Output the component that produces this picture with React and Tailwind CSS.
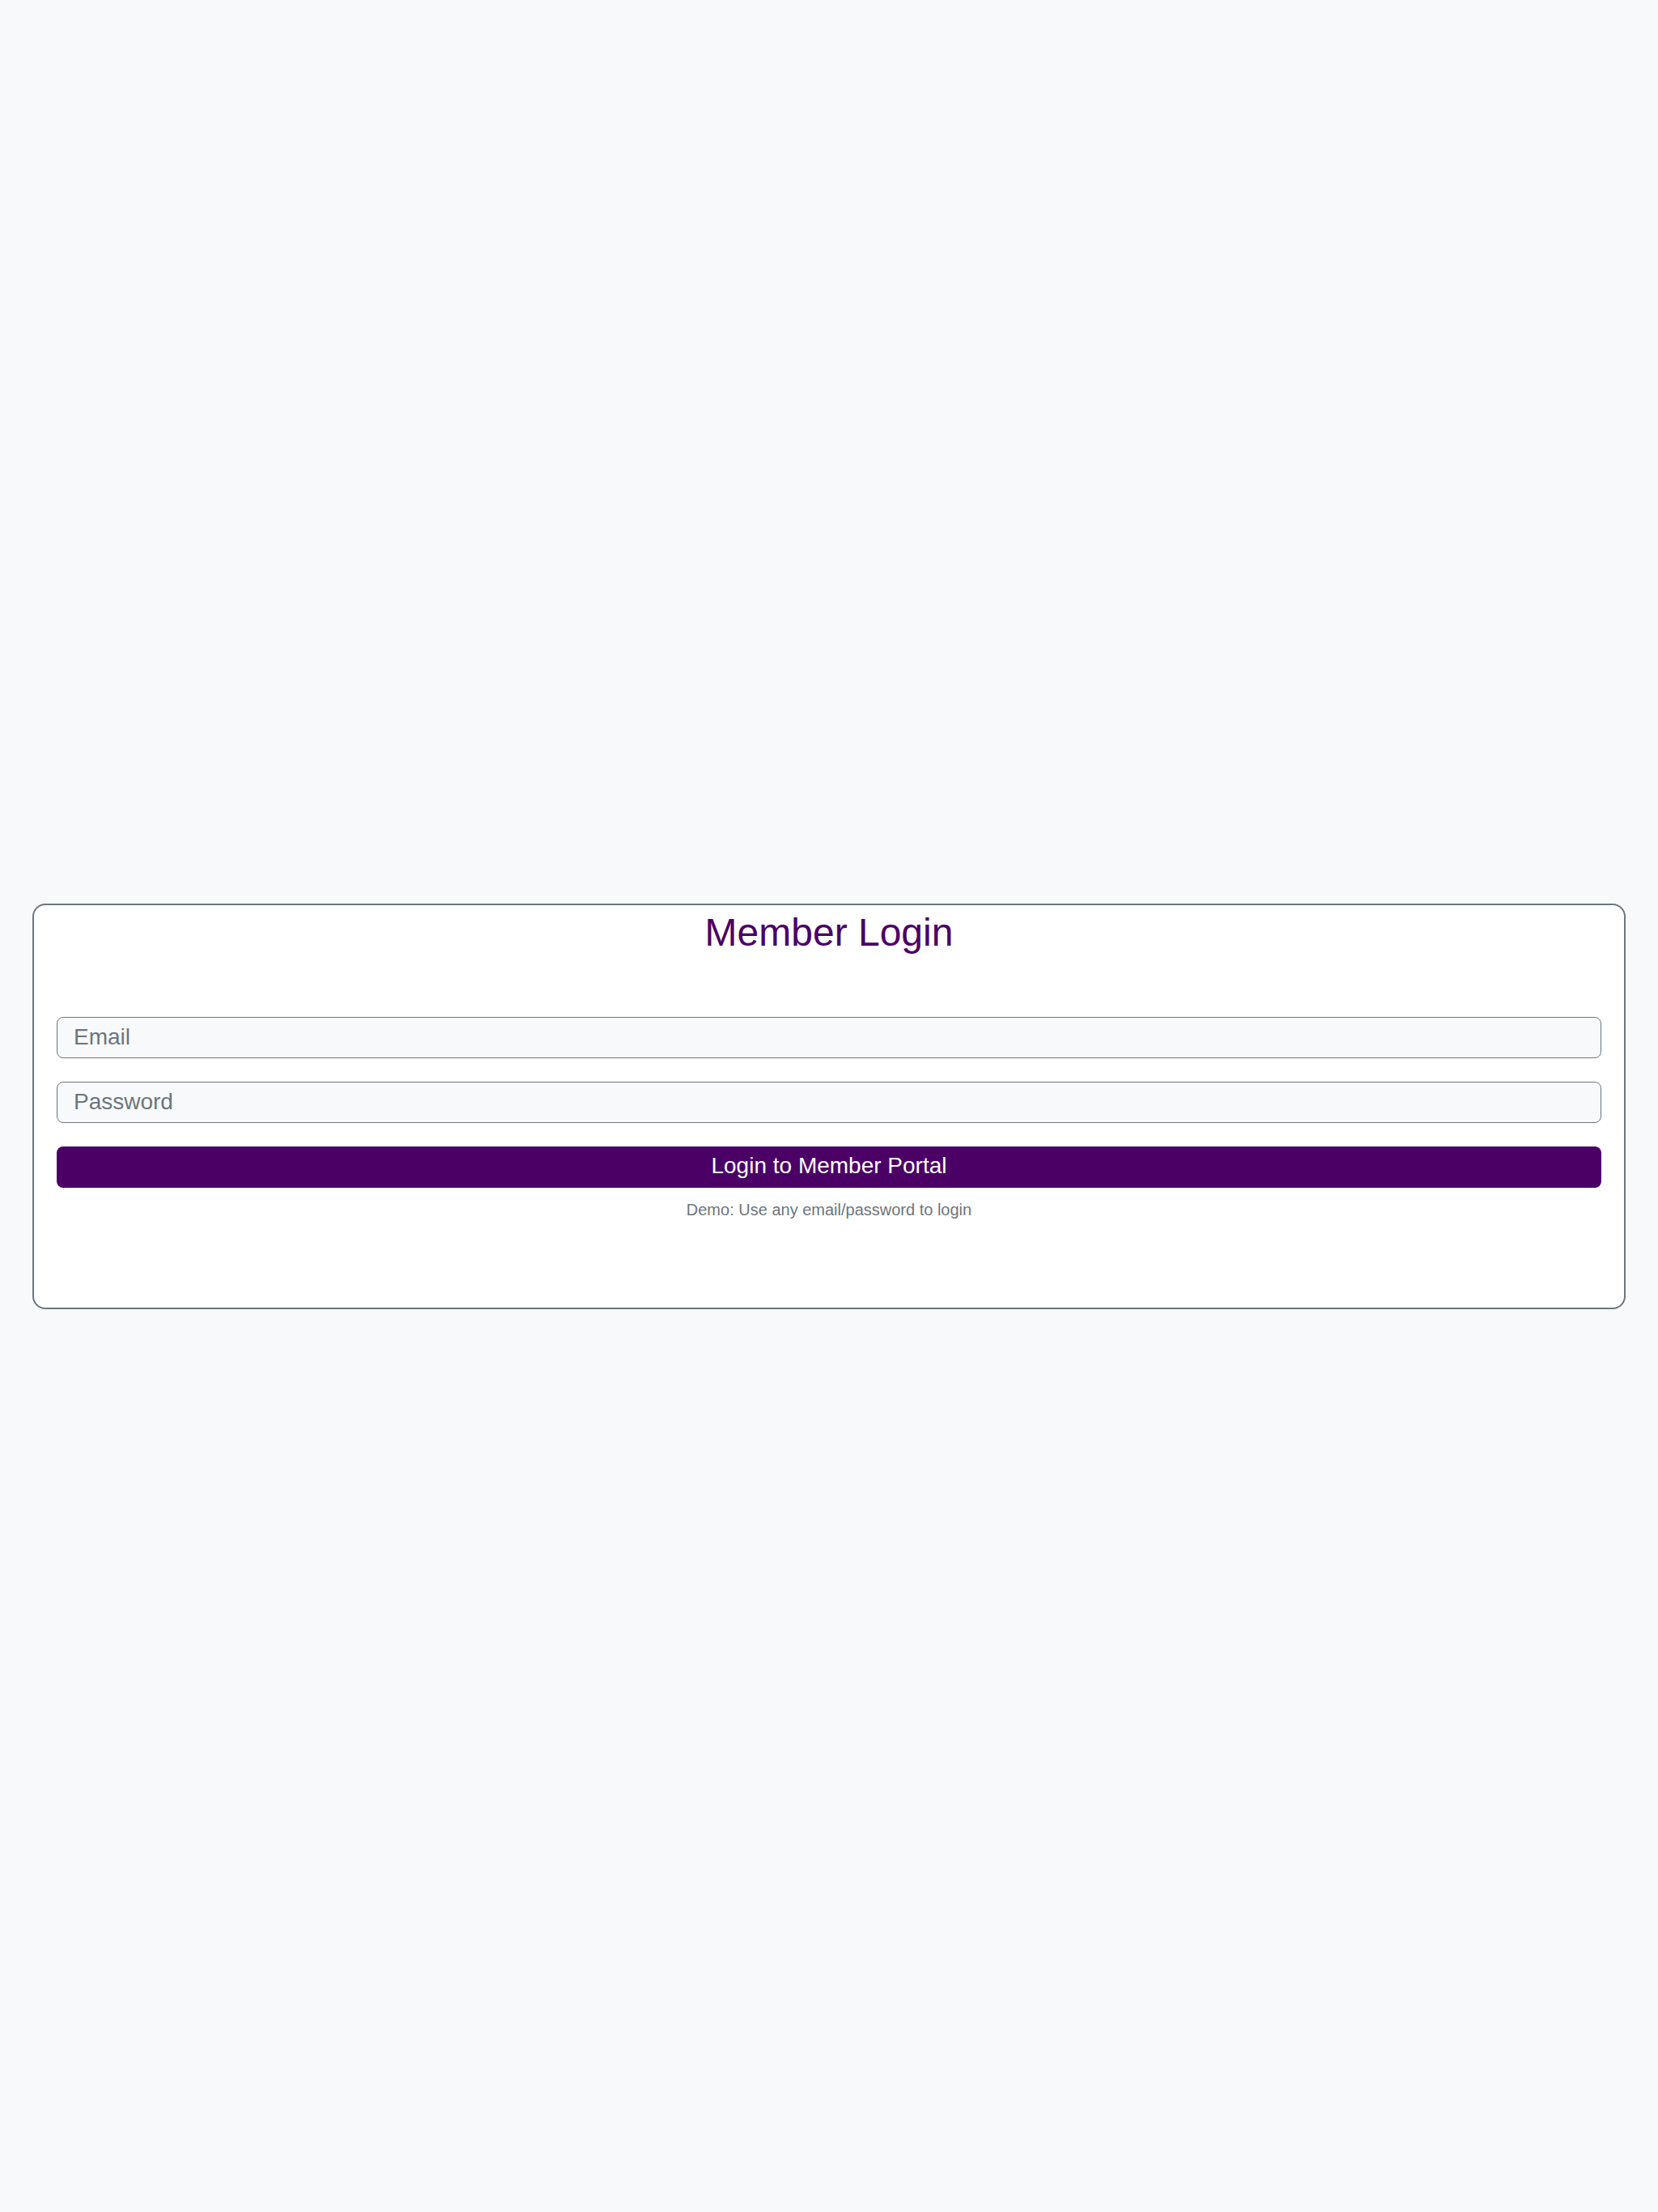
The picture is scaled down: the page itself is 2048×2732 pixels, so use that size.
import React from "react";

export default function App() {
  return (
    <div
      className="min-h-screen w-full bg-[#f8f9fa] flex items-center px-[40px]"
      style={{ fontFamily: '"Liberation Sans", Arial, sans-serif' }}
    >
      <div className="w-full bg-white border-2 border-[#6c757d] rounded-2xl px-[28px] pt-[10px] pb-[107px]">
        <h1 className="text-center text-[48px] leading-[48px] font-normal text-[#4b0066]">
          Member Login
        </h1>
        <form className="mt-[80px] flex flex-col" onSubmit={(e) => e.preventDefault()}>
          <input
            type="email"
            placeholder="Email"
            className="h-[51px] w-full rounded-lg border border-[#6c757d] bg-[#f8f9fa] px-[20px] text-[28px] leading-[33px] text-[#212529] placeholder:text-[#6c757d] outline-none"
          />
          <input
            type="password"
            placeholder="Password"
            className="mt-[29px] h-[51px] w-full rounded-lg border border-[#6c757d] bg-[#f8f9fa] px-[20px] text-[28px] leading-[33px] text-[#212529] placeholder:text-[#6c757d] outline-none"
          />
          <button
            type="submit"
            className="mt-[29px] h-[51px] w-full rounded-lg bg-[#4b0066] pb-[3px] text-white text-[28px] leading-[33px]"
          >
            Login to Member Portal
          </button>
          <p className="mt-[13px] text-center text-[20px] leading-[28px] text-[#6c757d]">
            Demo: Use any email/password to login
          </p>
        </form>
      </div>
    </div>
  );
}
